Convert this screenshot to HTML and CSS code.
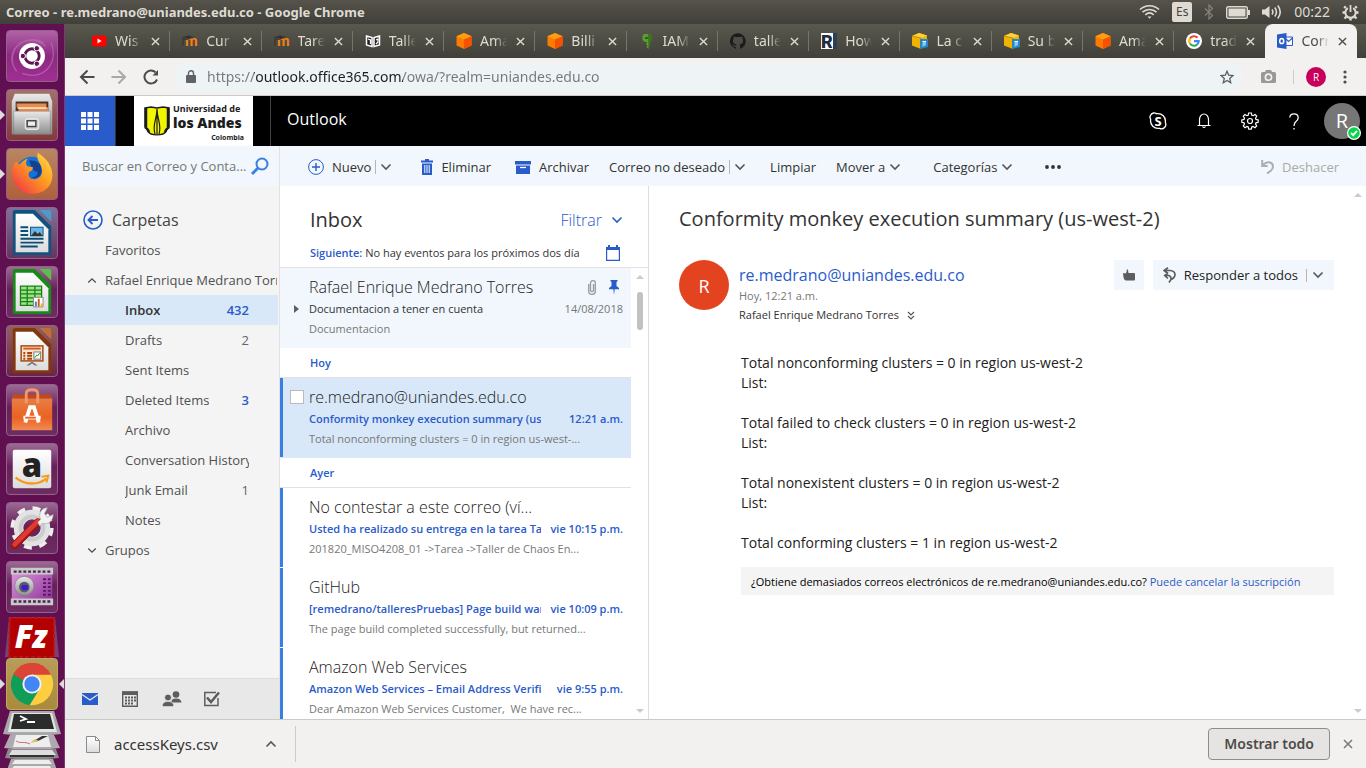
FILE: index.html
```html
<!DOCTYPE html>
<html lang="es">
<head>
<meta charset="utf-8">
<title>Correo - re.medrano@uniandes.edu.co</title>
<meta name="viewport" content="width=device-width, initial-scale=1">
<link rel="stylesheet" href="styles.css">
</head>
<body>
<svg class="defs" aria-hidden="true">
  <defs>
    <linearGradient id="silver" x1="0" y1="0" x2="0" y2="1"><stop offset="0" stop-color="#e9e9e9"/><stop offset="1" stop-color="#8d8d8d"/></linearGradient>
    <linearGradient id="paper" x1="0" y1="0" x2="0" y2="1"><stop offset="0" stop-color="#fff"/><stop offset="1" stop-color="#dcdcdc"/></linearGradient>
    <linearGradient id="bag" x1="0" y1="0" x2="0" y2="1"><stop offset="0" stop-color="#e67e45"/><stop offset=".6" stop-color="#ec6220"/><stop offset="1" stop-color="#f08a55"/></linearGradient>
    <linearGradient id="fox" x1="1" y1="0" x2="0" y2="1"><stop offset="0" stop-color="#ffe14d"/><stop offset=".45" stop-color="#ff9a1f"/><stop offset="1" stop-color="#f0264f"/></linearGradient>
    <linearGradient id="film" x1="0" y1="0" x2="1" y2="1"><stop offset="0" stop-color="#e09ae0"/><stop offset="1" stop-color="#8a2f96"/></linearGradient>
  </defs>
  <symbol id="i-close" viewBox="0 0 10 10"><path d="M1 1l8 8M9 1l-8 8" fill="none" stroke="currentColor" stroke-width="1.5"/></symbol>
  <symbol id="i-down" viewBox="0 0 12 8"><path d="M1.500 1.500l4.500 4.500 4.500-4.500" fill="none" stroke="currentColor" stroke-width="1.600"/></symbol>
  <symbol id="i-up" viewBox="0 0 12 8"><path d="M1.500 6.500l4.500-4.500 4.500 4.500" fill="none" stroke="currentColor" stroke-width="1.600"/></symbol>
  <symbol id="i-moodle" viewBox="0 0 16 16"><text x="3" y="13" font-family="Lato, sans-serif" font-weight="900" font-size="15" fill="#f08019">m</text><path d="M0 5l6-2 4 1-4 2-5 .500v6" fill="none" stroke="#3c3a37" stroke-width="1.600"/><path d="M2 5l4-1.500 3 .700-3 1.300z" fill="#2b2b2b"/></symbol>
  <symbol id="i-cube" viewBox="0 0 16 16"><path d="M8 0l7.500 3.300v9.200L8 16 .500 12.500V3.300z" fill="#ff7a00"/><path d="M8 0l7.500 3.300L8 6.500.500 3.300z" fill="#ff9d12"/><path d="M8 6.500l7.500-3.200v9.200L8 16z" fill="#f55200"/></symbol>
  <symbol id="i-box" viewBox="0 0 16 16"><path d="M0 3l7-3 8 2.500V6H9v10l-9-3.500z" fill="#f2b200"/><path d="M0 3l7-3 8 2.500-6 2.500z" fill="#ffd03b"/><path d="M0 3l9 2v11" fill="none" stroke="#9a6f00" stroke-width=".600"/><path d="M8 6h8v8l-8 2z" fill="#2388c9"/><path d="M10.500 8h3.500v1.500h-3.500zm0 2.500H14v1h-3.500zm0 2H14l-3.500 1z" fill="#fff"/></symbol>
</svg>

<header class="panel">
  <h1 class="panel-title">Correo - re.medrano@uniandes.edu.co - Google Chrome</h1>
  <div class="indicators">
    <svg width="21" height="16" viewBox="0 0 21 16" fill="none" stroke="#dfdbd2" stroke-width="1.600"><path d="M1 5.500C6.500 .500 14.500.500 20 5.500M3.500 8.200c4-3.700 10-3.700 14 0M6.300 10.800c2.500-2.200 5.900-2.200 8.400 0"/><path d="M8.500 12.500h4l-2 2.200z" fill="#dfdbd2" stroke="none"/></svg>
    <span class="kbd">Es</span>
    <svg width="10" height="16" viewBox="0 0 10 16" fill="none" stroke="#85837a" stroke-width="1.200"><path d="M1 4.500l7.500 7L5 15V1l3.500 3.500L1 11.500"/></svg>
    <svg width="24" height="13" viewBox="0 0 24 13"><rect x=".700" y=".700" width="20.600" height="11.600" rx="1.500" fill="none" stroke="#dfdbd2" stroke-width="1.400"/><rect x="2.500" y="2.500" width="17" height="8" fill="#dfdbd2"/><path d="M22 4h2v5h-2z" fill="#dfdbd2"/></svg>
    <svg width="20" height="16" viewBox="0 0 20 16" fill="none" stroke="#dfdbd2" stroke-width="1.600"><path d="M0 5.500h3L7.500 2v12L3 10.500H0z" fill="#dfdbd2" stroke="none"/><path d="M10 5.500c1 1.500 1 3.500 0 5M12.800 3.500c2 2.700 2 6.300 0 9M15.800 1.500c3 4 3 9 0 13"/></svg>
    <time class="clock">00:22</time>
    <svg width="17" height="17" viewBox="0 0 17 17" fill="none" stroke="#dfdbd2"><path d="M5.800 4.200a5.200 5.200 0 1 0 5.400 0" stroke-width="2"/><path d="M8.500 1v7" stroke-width="1.800"/><path d="M3.800 4L2.200 2.400M13.200 4l1.600-1.600M3 8.500H.500M14 8.500h2.500M4.500 12.500l-2 2M12.500 12.500l2 2M8.500 14v2.500" stroke-width="2.400"/></svg>
  </div>
</header>

<div class="desktop">
  <nav class="launcher" aria-label="Lanzador">
    <button class="tile t-dash" aria-label="Inicio"><svg viewBox="0 0 52 52"><path d="M6 34C2 12 26 2 40 16M10 42c-16-22 10-40 28-30M46 12c8 22-8 40-30 32" fill="none" stroke="#c06ab8" stroke-width="1.500" opacity=".7"/><circle cx="26" cy="26" r="13.500" fill="#fff"/><circle cx="26" cy="26" r="7.500" fill="none" stroke="#5c1650" stroke-width="3"/><g fill="#5c1650" stroke="#fff" stroke-width="1"><circle cx="16.500" cy="26" r="2.800"/><circle cx="31" cy="18" r="2.800"/><circle cx="31" cy="34" r="2.800"/></g></svg></button>
    <button class="tile t-files running" aria-label="Archivos"><svg viewBox="0 0 52 52"><path d="M8 4h36l3 8v34H5V12z" fill="url(#silver)"/><path d="M9 12h34v10H9z" fill="#4b3228"/><path d="M10 14h31v4H10zm2 4h31v5H12z" fill="#ea8a4c"/><path d="M11 18h30v1.500H11z" fill="#fff0dc"/><path d="M7 22h38v24H7z" fill="url(#silver)" stroke="#777" stroke-width=".500"/><rect x="19" y="30" width="14" height="11" rx="2" fill="#ccc" stroke="#f4f4f4"/><rect x="21" y="32" width="9" height="6" fill="#eee" stroke="#444" stroke-width="1.500"/></svg></button>
    <button class="tile t-fox running" aria-label="Firefox"><svg viewBox="0 0 52 52"><circle cx="26" cy="25" r="17" fill="#1372d8"/><path d="M23 12c8-1 14 4 13 11s-7 9-11 6c4 1 7-1 7-5-7-1-7-8-9-12z" fill="#15408f"/><path d="M5 22c1-5 3-8 5-9 1 2 2 3 3 3 2-2 5-5 9-6-2 2-3 5-1 8l6 1c0 3-2 4-4 5-2 5 2 9 8 7 5-2 6-6 5-11-1-6-6-8-4-16 5 3 11 9 12 12 6 10 4 24-9 29-13 5-30-2-30-23z" fill="url(#fox)"/></svg></button>
    <button class="tile t-writer" aria-label="Writer"><svg viewBox="0 0 52 52"><path d="M9 2h20l17 17v28q0 2-2 2H8q-2 0-2-2V4q0-2 3-2z" fill="#12527e"/><path d="M34 2h10q2 0 2 2v10z" fill="#4c9cc9"/><path d="M9 6h18l16 16v24H9z" fill="url(#paper)"/><path d="M14 20h8M14 24h8M14 28h8M14 32h24M14 36h24M14 40h18" stroke="#0b4e79" stroke-width="2"/><rect x="24.500" y="20" width="13" height="9" fill="#67b8e8" stroke="#0b4e79"/><path d="M25 29l4-5 3 3 2-2 3 4z" fill="#333"/></svg></button>
    <button class="tile t-calc" aria-label="Calc"><svg viewBox="0 0 52 52"><path d="M9 2h20l17 17v28q0 2-2 2H8q-2 0-2-2V4q0-2 3-2z" fill="#188a18"/><path d="M34 2h10q2 0 2 2v10z" fill="#5cc046"/><path d="M9 6h18l16 16v24H9z" fill="url(#paper)"/><path d="M14 20h22v20H14z" fill="#9ce383"/><path d="M14 20h22v20H14zM14 24h22M14 28h22M14 32h22M14 36h22M21 20v20M29 20v20" fill="none" stroke="#168016" stroke-width="1.300"/><path d="M27.500 31.500h10v10h-10z" fill="#fff" stroke="#888"/><path d="M29 36h2v5h-2z" fill="#3a87c7"/><path d="M32 33h2v8h-2z" fill="#d85a14"/><path d="M35 38h2v3h-2z" fill="#e6b600"/></svg></button>
    <button class="tile t-impress" aria-label="Impress"><svg viewBox="0 0 52 52"><path d="M9 2h20l17 17v28q0 2-2 2H8q-2 0-2-2V4q0-2 3-2z" fill="#83370f"/><path d="M34 2h10q2 0 2 2v10z" fill="#bf6f3c"/><path d="M9 6h18l16 16v24H9z" fill="url(#paper)"/><rect x="14.700" y="20.700" width="22.600" height="15.600" fill="#f9e2d2" stroke="#a3450d" stroke-width="1.500"/><path d="M17 23.500h18" stroke="#d85a14" stroke-width="2"/><path d="M17 28h2M17 31h2M17 34h2M21 28h5M21 31h5M21 34h5" stroke="#a3450d" stroke-width="2"/><rect x="28" y="27" width="7" height="7.500" fill="#fff" stroke="#777"/><path d="M29 33l2-3 1 1 2-3" fill="none" stroke="#1c9a1c"/><path d="M26 37l-6 4h3l3-2 3 2h3z" fill="#777"/></svg></button>
    <button class="tile" aria-label="Software de Ubuntu"><svg viewBox="0 0 52 52"><path d="M6 10h39l2 4H5z" fill="#c14a17"/><path d="M5 14h42v33H5z" fill="url(#bag)"/><path d="M20 19V9q0-4 6-4t6 4v10" fill="none" stroke="#f0986c" stroke-width="3"/><path d="M19 39l5-16h4l5 16M17 34h18" fill="none" stroke="#fff" stroke-width="4"/><path d="M19 34h11" stroke="#f26322" stroke-width="2"/></svg></button>
    <button class="tile" aria-label="Amazon"><svg viewBox="0 0 52 52"><rect x="6" y="6" width="40" height="40" rx="2" fill="url(#paper)"/><text x="26" y="34" text-anchor="middle" font-family="Open Sans, sans-serif" font-weight="800" font-size="34" fill="#222">a</text><path d="M9 35c10 8 23 8 32 1" fill="none" stroke="#f79a1a" stroke-width="2.500"/><path d="M36 34l7-1-2 7" fill="none" stroke="#f79a1a" stroke-width="2"/></svg></button>
    <button class="tile" aria-label="Configuración del sistema"><svg viewBox="0 0 52 52"><circle cx="26" cy="26" r="20" fill="none" stroke="#eee" stroke-width="5" stroke-dasharray="8 7.700"/><circle cx="26" cy="26" r="14" fill="none" stroke="#e3e3e3" stroke-width="10"/><circle cx="26" cy="26" r="12" fill="none" stroke="#ccc" stroke-width="4"/><path d="M8 44L32 20" stroke="#9d1414" stroke-width="8" stroke-linecap="round"/><path d="M8 43L32 19" stroke="#dc3a34" stroke-width="5" stroke-linecap="round"/><path d="M32 20l3-3c-3-6 1-12 7-12l-3 6 3 4 6-3c0 7-6 11-11 9l-3 3z" fill="#f2f2f2" stroke="#aaa" stroke-width=".700"/></svg></button>
    <button class="tile" aria-label="Grabador de pantalla"><svg viewBox="0 0 52 52"><path d="M5 8h42v35H5z" fill="url(#film)"/><path d="M4 6h44v7H4zM4 38h44v7H4z" fill="#c9c9c9"/><path d="M7 10h38M7 41h38" stroke="#4d2350" stroke-width="2.500" stroke-dasharray="3 2"/><path d="M39 17v20M44 17v20" stroke="#571a60" stroke-width="3" stroke-dasharray="2 2"/><circle cx="18" cy="25" r="10" fill="url(#silver)" stroke="#777" stroke-width=".600"/><circle cx="18" cy="26" r="5.500" fill="#5a5a66"/><rect x="15" y="24" width="7" height="5" rx="2" fill="#3b1bd8"/></svg></button>
    <div class="tile-stack">
      <button class="fold" aria-label="FileZilla"><svg width="56" height="42" viewBox="0 0 56 42"><path d="M5 1h46l4 40H1z" fill="#7a4070"/><path d="M6 2h44v39H5z" fill="#b30000" stroke="#c01010" stroke-width="2" stroke-dasharray="4 2"/><text x="27" y="32" text-anchor="middle" font-family="Open Sans, sans-serif" font-style="italic" font-weight="800" font-size="31" fill="#fff">Fz</text></svg></button>
      <button class="tile t-chrome running active" aria-label="Google Chrome"><svg viewBox="0 0 52 52"><circle cx="26" cy="26" r="22" fill="#ffcd40"/><path d="M26 26L7 15a22 22 0 0 1 38.500 1H26z" fill="#db4437"/><path d="M26 26L7 15a22 22 0 0 0 16.500 33L34 31z" fill="#0f9d58"/><path d="M6.500 15.500a22 22 0 0 1 39 .500H26a10 10 0 0 0-9 6z" fill="#db4437"/><circle cx="26" cy="26" r="10" fill="#f1f1f1"/><circle cx="26" cy="26" r="8" fill="#4285f4"/></svg></button>
      <button class="fold" aria-label="Más aplicaciones"><svg width="60" height="60" viewBox="0 0 60 60"><path d="M8 1h44l7 23q-29 4-58 0z" fill="#a9a9a9"/><path d="M10 3h40l5 19H6z" fill="#e4e4e4"/><path d="M12 4h36l4 15H9z" fill="#2b2d2c"/><path d="M18 6l6 3-6 2M25 12h8" fill="none" stroke="#fff" stroke-width="1.800"/><path d="M8 25h44l6 13q-28 4-56 0z" fill="#b1a9b0"/><path d="M14 25h32l3 12H11z" fill="#eee"/><path d="M30 32l10-6h6l-10 5z" fill="#333"/><path d="M28 33l5-4 4 2z" fill="#dfbf53"/><path d="M14 31c5 3 8 0 14 3" fill="none" stroke="#c67" /><path d="M6 39h48l3 9q-27 3-54 0z" fill="#8c858b"/><path d="M10 40h40l4 5H7z" fill="#ddd"/><path d="M8 46h44" stroke="#333" stroke-width="2"/><path d="M9 49h42l4 11H5z" fill="#a9a9a9"/><path d="M13 50h34l3 4H10zM12 56h36l2 4H9z" fill="#eee"/></svg></button>
    </div>
  </nav>

  <div class="browser">
    <div class="tabstrip">
      <div class="tabs">
        <div class="tab"><svg class="fav" viewBox="0 0 16 16"><rect x="1" y="2.500" width="14.500" height="11" rx="2.500" fill="red"/><path d="M6.500 5.500l4.200 2.500-4.200 2.500z" fill="#fff"/></svg><span>Wis</span><button aria-label="Cerrar"><svg><use href="#i-close"/></svg></button></div>
        <div class="tab"><svg class="fav"><use href="#i-moodle"/></svg><span>Cur</span><button aria-label="Cerrar"><svg><use href="#i-close"/></svg></button></div>
        <div class="tab"><svg class="fav"><use href="#i-moodle"/></svg><span>Tare</span><button aria-label="Cerrar"><svg><use href="#i-close"/></svg></button></div>
        <div class="tab"><svg class="fav" viewBox="0 0 16 16"><path d="M1.500 3l5.500 1.500v9L1.500 12zM14.500 3L9 4.500v9l5.500-1.500z" fill="#222" stroke="#fff" stroke-width="1.500"/><path d="M3 6l2.500 1v4M11 7l2-1v3l-2 2" fill="none" stroke="#fff" stroke-width="1.200"/></svg><span>Talle</span><button aria-label="Cerrar"><svg><use href="#i-close"/></svg></button></div>
        <div class="tab"><svg class="fav"><use href="#i-cube"/></svg><span>Ama</span><button aria-label="Cerrar"><svg><use href="#i-close"/></svg></button></div>
        <div class="tab"><svg class="fav"><use href="#i-cube"/></svg><span>Billi</span><button aria-label="Cerrar"><svg><use href="#i-close"/></svg></button></div>
        <div class="tab"><svg class="fav" viewBox="0 0 16 16"><path d="M5 1h6l2 2v4l-2 1.500L9.500 16l-2-2 1-1.500-1.500-1 1-2L5 8.500 3.500 7V3z" fill="#55a02c"/><path d="M9 1h2l2 2v4l-2 1.500L9.500 16z" fill="#3a741c"/><path d="M6 4h3v2H6z" fill="#4d4c45"/></svg><span>IAM</span><button aria-label="Cerrar"><svg><use href="#i-close"/></svg></button></div>
        <div class="tab"><svg class="fav" viewBox="0 0 16 16"><path d="M8 .200a8 8 0 0 0-2.500 15.600c.400.100.500-.200.500-.400v-1.500c-2.200.500-2.700-1-2.700-1-.400-.900-.900-1.200-.900-1.200-.700-.500.100-.500.100-.500.800.100 1.200.800 1.200.800.700 1.200 1.900.900 2.300.700.100-.500.300-.900.500-1.100-1.800-.200-3.600-.900-3.600-4 0-.900.300-1.600.800-2.100-.100-.200-.400-1 .100-2.100 0 0 .700-.200 2.200.800a7.600 7.600 0 0 1 4 0c1.500-1 2.200-.800 2.200-.800.400 1.100.200 1.900.100 2.100.500.600.800 1.300.800 2.100 0 3.100-1.900 3.700-3.700 3.900.300.300.600.800.600 1.500v2.300c0 .200.100.500.500.400A8 8 0 0 0 8 .200z" fill="#1b1b1b"/></svg><span>talle</span><button aria-label="Cerrar"><svg><use href="#i-close"/></svg></button></div>
        <div class="tab"><svg class="fav" viewBox="0 0 16 16"><rect width="16" height="16" fill="#2d3f57"/><path d="M0 0h12v16H0z" fill="#fff"/><text x="0" y="15" font-family="Roboto, sans-serif" font-weight="900" font-size="18" fill="#1f2d40">R</text></svg><span>How</span><button aria-label="Cerrar"><svg><use href="#i-close"/></svg></button></div>
        <div class="tab"><svg class="fav"><use href="#i-box"/></svg><span>La c</span><button aria-label="Cerrar"><svg><use href="#i-close"/></svg></button></div>
        <div class="tab"><svg class="fav"><use href="#i-box"/></svg><span>Su b</span><button aria-label="Cerrar"><svg><use href="#i-close"/></svg></button></div>
        <div class="tab"><svg class="fav"><use href="#i-cube"/></svg><span>Ama</span><button aria-label="Cerrar"><svg><use href="#i-close"/></svg></button></div>
        <div class="tab last"><svg class="fav" viewBox="0 0 16 16"><circle cx="8" cy="8" r="8" fill="#fff"/><g fill="none" stroke-width="2.200"><path d="M11.500 4.800A4.700 4.700 0 0 0 4 5.500" stroke="#ea4335"/><path d="M4 5.500a4.700 4.700 0 0 0 0 5" stroke="#fbbc05"/><path d="M4 10.500a4.700 4.700 0 0 0 7.200 1" stroke="#34a853"/><path d="M11.200 11.500A4.500 4.500 0 0 0 12.700 8.100H8" stroke="#4285f4"/></g></svg><span>trad</span><button aria-label="Cerrar"><svg><use href="#i-close"/></svg></button></div>
        <div class="tab current"><svg class="fav" viewBox="0 0 16 16"><path d="M8.500 4h7v8.500h-7z" fill="#fff" stroke="#2a5cc5"/><path d="M9 6l2.500 2.500L15.500 5" fill="none" stroke="#2a5cc5" stroke-width="1.200"/><path d="M0 1.500L9.500 0v16L0 14.500z" fill="#2a5cc5"/><ellipse cx="4.700" cy="8" rx="2" ry="2.600" fill="none" stroke="#fff" stroke-width="1.500"/></svg><span>Corr</span><button aria-label="Cerrar"><svg><use href="#i-close"/></svg></button></div>
      </div>
      <button class="newtab" aria-label="Pestaña nueva"><svg width="12" height="12" viewBox="0 0 12 12"><path d="M6 0v12M0 6h12" stroke="#e8e6df" stroke-width="1.800"/></svg></button>
    </div>

    <div class="toolbar">
      <button aria-label="Atrás"><svg width="16" height="16" viewBox="0 0 16 16" fill="none" stroke="#4c4b48" stroke-width="2"><path d="M15.500 8H2M8.500 1.500L2 8l6.500 6.500"/></svg></button>
      <button aria-label="Adelante"><svg width="16" height="16" viewBox="0 0 16 16" fill="none" stroke="#aaa9a6" stroke-width="2"><path d="M.500 8H14M7.500 1.500L14 8l-6.500 6.500"/></svg></button>
      <button aria-label="Recargar"><svg width="16" height="16" viewBox="0 0 16 16" fill="none" stroke="#4c4b48" stroke-width="2"><path d="M14 10.500A6.500 6.500 0 1 1 12.500 3.300"/><path d="M9.500 6.500H15V1z" fill="#4c4b48" stroke="none"/></svg></button>
      <div class="omnibox">
        <svg width="10" height="13" viewBox="0 0 10 13"><path d="M1 5h8q1 0 1 1v6q0 1-1 1H1q-1 0-1-1V6q0-1 1-1z" fill="#5f6368"/><path d="M2.500 5.500V3.200a2.500 2.500 0 0 1 5 0v2.300" fill="none" stroke="#5f6368" stroke-width="1.400"/></svg>
        <input type="text" aria-label="Dirección" value="https://outlook.office365.com/owa/?realm=uniandes.edu.co">
        <svg width="14" height="14" viewBox="0 0 14 14"><path d="M7 1.200l1.700 4 4.300.400-3.300 2.800 1 4.300L7 10.400l-3.700 2.300 1-4.300L1 5.600l4.300-.400z" fill="none" stroke="#5a5e63" stroke-width="1.300"/></svg>
      </div>
      <div class="extras">
        <svg width="15" height="13" viewBox="0 0 15 13"><path d="M1.500 2H4l1-2h5l1 2h2.500Q15 2 15 3.500v8q0 1.500-1.500 1.500h-12Q0 13 0 11.500v-8Q0 2 1.500 2z" fill="#999895"/><circle cx="7.500" cy="7.200" r="3.900" fill="#f2f1f0"/><circle cx="7.500" cy="7.200" r="2.200" fill="#999895"/></svg>
        <i class="vline"></i>
        <button class="profile" aria-label="Perfil">R</button>
        <svg width="4" height="14" viewBox="0 0 4 14" fill="#4c4b48"><circle cx="2" cy="2" r="1.600"/><circle cx="2" cy="7" r="1.600"/><circle cx="2" cy="12" r="1.600"/></svg>
      </div>
    </div>

    <div class="suite">
      <button class="waffle" aria-label="Iniciador de aplicaciones"><svg width="18" height="18" viewBox="0 0 18 18" fill="#fff"><path d="M0 0h5v5H0zM6.500 0h5v5h-5zM13 0h5v5h-5zM0 6.500h5v5H0zM6.500 6.500h5v5h-5zM13 6.500h5v5h-5zM0 13h5v5H0zM6.500 13h5v5h-5zM13 13h5v5h-5z"/></svg></button>
      <div class="brand">
        <svg width="26" height="30" viewBox="0 0 26 30"><path d="M1 2l6-1 6 1 6-1 6 1v19c-3 1-2 6-6 7-3 1-9 1-12 0-4-1-3-6-6-7z" fill="#f2f500" stroke="#1c1c1c" stroke-width="1.500"/><path d="M2 2v20q2 1 3 4M24 2v20q-2 1-3 4" fill="none" stroke="#1c1c1c" stroke-width="2.500"/><path d="M13 3c0 10-5 16-2 25M13 3c0 10 5 16 2 25M13 6v22" fill="none" stroke="#1c1c1c" stroke-width="1.200"/></svg>
        <div class="brand-text"><span>Universidad de</span><strong>los Andes</strong><small>Colombia</small></div>
      </div>
      <span class="suite-app">Outlook</span>
      <div class="suite-icons">
        <button aria-label="Skype"><svg width="18" height="18" viewBox="0 0 18 18"><path d="M4.500 1a4 4 0 0 1 3 .700A7.500 7.500 0 0 1 16.300 10.500 4.300 4.300 0 0 1 10.500 16.300 7.500 7.500 0 0 1 1.700 7.500 4.300 4.300 0 0 1 4.500 1z" fill="none" stroke="#fff" stroke-width="1.300"/><text x="9" y="13.500" text-anchor="middle" font-family="Open Sans, sans-serif" font-size="13" font-weight="700" fill="#fff">S</text></svg></button>
        <button aria-label="Notificaciones"><svg width="14" height="16" viewBox="0 0 14 16" fill="none" stroke="#fff" stroke-width="1.200"><path d="M.500 12.500h13M2.500 12V6.500a4.500 5.500 0 0 1 9 0V12M5.500 13.500q1.500 2 3 0"/></svg></button>
        <button aria-label="Configuración"><svg width="18" height="18" viewBox="0 0 18 18" fill="none" stroke="#fff" stroke-width="1.200"><path d="M7.600 1h2.800l.500 2.200 1.200.500 2-1.200 1.600 1.700-1.200 2 .500 1.200 2.200.500v2.400l-2.200.500-.500 1.200 1.200 2-1.700 1.700-2-1.200-1.200.500-.500 2.200H7.700l-.500-2.200-1.200-.500-2 1.200-1.700-1.700 1.200-2L3 10.800l-2.200-.500V7.900L3 7.400l.500-1.200-1.200-2L4 2.500l2 1.200 1.200-.500z"/><circle cx="9" cy="9" r="2.500"/></svg></button>
        <button aria-label="Ayuda"><svg width="10" height="17" viewBox="0 0 10 17" fill="none" stroke="#fff" stroke-width="1.300"><path d="M.800 4.500Q1 .800 5 .800t4.200 3.700Q9.200 7 7 8.500 5 10 5 13"/><path d="M5 15v1.600"/></svg></button>
        <button class="me" aria-label="Cuenta">R<svg class="presence" width="14" height="14" viewBox="0 0 14 14"><circle cx="7" cy="7" r="6.400" fill="#0bd34a" stroke="#fff" stroke-width="1.200"/><path d="M4 7l2.200 2.200L10 4.800" fill="none" stroke="#fff" stroke-width="1.800"/></svg></button>
      </div>
    </div>

    <div class="mail">
      <aside class="sidebar">
        <form class="search"><input type="text" aria-label="Buscar" placeholder="Buscar en Correo y Conta..."><button type="button" aria-label="Buscar"><svg width="18" height="18" viewBox="0 0 18 18" fill="none" stroke="#3a7fe0"><circle cx="11" cy="7" r="5.500" stroke-width="2"/><path d="M7 11l-6 6" stroke-width="2.800"/></svg></button></form>
        <div class="folders">
          <h2><svg width="20" height="20" viewBox="0 0 20 20" fill="none" stroke="#2a5bcb"><circle cx="10" cy="10" r="9" stroke-width="1.600"/><path d="M15 10H6M9.500 6L5.500 10l4 4" stroke-width="1.900"/></svg>Carpetas</h2>
          <a href="#" class="root"><i></i><span>Favoritos</span></a>
          <a href="#" class="root wide"><svg><use href="#i-up"/></svg><span>Rafael Enrique Medrano Torres</span></a>
          <a href="#" class="folder selected"><span>Inbox</span><b>432</b></a>
          <a href="#" class="folder"><span>Drafts</span><em>2</em></a>
          <a href="#" class="folder"><span>Sent Items</span></a>
          <a href="#" class="folder"><span>Deleted Items</span><b>3</b></a>
          <a href="#" class="folder"><span>Archivo</span></a>
          <a href="#" class="folder"><span>Conversation History</span></a>
          <a href="#" class="folder"><span>Junk Email</span><em>1</em></a>
          <a href="#" class="folder"><span>Notes</span></a>
          <a href="#" class="root"><svg><use href="#i-down"/></svg><span>Grupos</span></a>
        </div>
        <div class="modules">
          <button aria-label="Correo"><svg width="16" height="12" viewBox="0 0 16 12"><path d="M0 0h16v12H0z" fill="#2a5bcb"/><path d="M0 1.500l8 5.500 8-5.500" fill="none" stroke="#e8e8e8" stroke-width="1.300"/></svg></button>
          <button aria-label="Calendario"><svg width="16" height="16" viewBox="0 0 16 16"><path d="M.700 1h14.600v14.300H.700z" fill="none" stroke="#5d5d5d" stroke-width="1.400"/><path d="M0 .500h16V4H0z" fill="#5d5d5d"/><path d="M3 6.500h11M3 9.500h11M3 12.500h8" stroke="#5d5d5d" stroke-width="2" stroke-dasharray="2 1"/></svg></button>
          <button aria-label="Contactos"><svg width="20" height="16" viewBox="0 0 20 16" fill="#5d5d5d"><circle cx="14" cy="3.500" r="3.300"/><path d="M9.500 11.500Q9 7.500 14 7.500t5.500 4z"/><circle cx="6" cy="6.500" r="3.500" stroke="#e8e8e8"/><path d="M.500 15.500Q0 10.500 6 10.500t5.500 5z" stroke="#e8e8e8" stroke-width=".600"/></svg></button>
          <button aria-label="Tareas"><svg width="16" height="16" viewBox="0 0 16 16" fill="none" stroke="#5d5d5d"><path d="M14 7v7.500H.800V1.500H12" stroke-width="1.500"/><path d="M3 6.500l4 4.500L15 1.500" stroke-width="2.500"/></svg></button>
        </div>
      </aside>

      <main class="content">
        <div class="commands">
          <button class="cmd-new"><svg width="16" height="16" viewBox="0 0 16 16" fill="none" stroke="#2a5bcb"><circle cx="8" cy="8" r="7.400"/><path d="M8 4v8M4 8h8" stroke-width="1.400"/></svg>Nuevo<i class="vline"></i><svg class="chev"><use href="#i-down"/></svg></button>
          <button class="cmd-del"><svg width="12" height="16" viewBox="0 0 12 16"><path d="M0 1.500h4V0h4v1.500h4v2H0z" fill="#2a5bcb"/><path d="M1 4.500h10V16H1z" fill="#2a5bcb"/><path d="M3.800 6v8M6 6v8M8.200 6v8" stroke="#f1f7fc"/></svg>Eliminar</button>
          <button class="cmd-arc"><svg width="16" height="13" viewBox="0 0 16 13"><path d="M0 0h16v3.500H0zM1 4.500h14V13H1z" fill="#2a5bcb"/><path d="M5 6.500h6" stroke="#fff" stroke-width="1.300"/></svg>Archivar</button>
          <button class="cmd-junk">Correo no deseado<i class="vline"></i><svg class="chev"><use href="#i-down"/></svg></button>
          <button class="cmd-clean">Limpiar</button>
          <button class="cmd-move">Mover a<svg class="chev"><use href="#i-down"/></svg></button>
          <button class="cmd-cat">Categorías<svg class="chev"><use href="#i-down"/></svg></button>
          <button aria-label="Más"><svg width="16" height="4" viewBox="0 0 16 4" fill="#333"><circle cx="2" cy="2" r="1.900"/><circle cx="8" cy="2" r="1.900"/><circle cx="14" cy="2" r="1.900"/></svg></button>
          <button class="undo" disabled><svg width="13" height="14" viewBox="0 0 13 14" fill="none" stroke="#a9b0b5" stroke-width="2"><path d="M1.200 0v6h5.500M1.500 5.500Q5 1.500 9 2.500q3 1 3 4 0 2.500-2.500 4.500L6 13.500"/></svg>Deshacer</button>
        </div>

        <div class="panes">
          <section class="list">
            <div class="list-head"><h2>Inbox</h2><button>Filtrar<svg class="chev"><use href="#i-down"/></svg></button></div>
            <div class="agenda"><p><strong>Siguiente:</strong> No hay eventos para los próximos dos día</p><svg width="14" height="16" viewBox="0 0 14 16"><path d="M.600 2.500h12.800v12.900H.600z" fill="none" stroke="#2a5bcb" stroke-width="1.200"/><path d="M0 2h14v3H0zM2 0h2v3H2zM10 0h2v3h-2z" fill="#2a5bcb"/></svg></div>
            <div class="scroller">
              <div class="messages">
                <article class="msg pinned">
                  <h3>Rafael Enrique Medrano Torres</h3>
                  <span class="flags"><svg width="8" height="15" viewBox="0 0 8 15" fill="none" stroke="#999" stroke-width="1.300"><path d="M5.500 4v6.500q0 1-1.500 1t-1.500-1V3.500Q2.500.700 5 .700T7.300 3v8.500Q7.300 14.300 4 14.300T.700 11.500V4"/></svg><svg width="10" height="15" viewBox="0 0 10 15" fill="#2a5bcb"><path d="M1.500 0h7v1.200L7.500 2v4L10 8v1.200H5.700L5 15l-.700-5.800H0V8l2.500-2V2l-1-.800z"/></svg></span>
                  <svg class="expand" width="5" height="8" viewBox="0 0 5 8"><path d="M0 0l5 4-5 4z" fill="#5d5d6a"/></svg>
                  <p class="subject">Documentacion a tener en cuenta</p><time>14/08/2018</time>
                  <p class="preview">Documentacion</p>
                </article>
                <h4>Hoy</h4>
                <article class="msg unread open">
                  <input type="checkbox" aria-label="Seleccionar mensaje">
                  <h3>re.medrano@uniandes.edu.co</h3>
                  <p class="subject">Conformity monkey execution summary (us-west-2)</p><time>12:21 a.m.</time>
                  <p class="preview">Total nonconforming clusters = 0 in region us-west-...</p>
                </article>
                <h4>Ayer</h4>
                <article class="msg unread">
                  <h3>No contestar a este correo (ví...</h3>
                  <p class="subject">Usted ha realizado su entrega en la tarea Taller</p><time>vie 10:15 p.m.</time>
                  <p class="preview">201820_MISO4208_01 -&gt;Tarea -&gt;Taller de Chaos En...</p>
                </article>
                <article class="msg unread">
                  <h3>GitHub</h3>
                  <p class="subject">[remedrano/talleresPruebas] Page build warning</p><time>vie 10:09 p.m.</time>
                  <p class="preview">The page build completed successfully, but returned...</p>
                </article>
                <article class="msg unread">
                  <h3>Amazon Web Services</h3>
                  <p class="subject">Amazon Web Services – Email Address Verification</p><time>vie 9:55 p.m.</time>
                  <p class="preview">Dear Amazon Web Services Customer,&nbsp; We have rec...</p>
                </article>
              </div>
              <div class="rail"><i class="arrow up"></i><i class="thumb"></i><i class="arrow down"></i></div>
            </div>
          </section>

          <section class="reading">
            <div class="reading-main">
              <h2>Conformity monkey execution summary (us-west-2)</h2>
              <header class="sender">
                <span class="avatar">R</span>
                <div class="who">
                  <a href="#">re.medrano@uniandes.edu.co</a>
                  <time>Hoy, 12:21 a.m.</time>
                  <p>Rafael Enrique Medrano Torres<svg width="8" height="9" viewBox="0 0 8 9" fill="none" stroke="#555" stroke-width="1.200"><path d="M1 1l3 3 3-3M1 5l3 3 3-3"/></svg></p>
                </div>
                <div class="actions">
                  <button class="like" aria-label="Me gusta"><svg width="12" height="12" viewBox="0 0 12 12" fill="#5d5d5d"><path d="M4 0l1 1 .500 3H11q1 .200 1 1v5.500q0 1-1 1H3Q1 11 .500 8.500L0 4l2.500.500L3.500 3z"/></svg></button>
                  <button class="reply"><svg width="13" height="16" viewBox="0 0 13 16" fill="none" stroke="#5d5d5d" stroke-width="1.700"><path d="M5 .700L1.200 3.500 5 6.500M1.500 3.500H7q5 .200 5 4.500-.500 3.500-4 4.500M5 6L1.800 8.500 5 11.500M2 8.500h4q2.500 1 2 4L6 15.500"/></svg>Responder a todos<i class="vline"></i><svg class="chev"><use href="#i-down"/></svg></button>
                </div>
              </header>
              <div class="body">
                <p>Total nonconforming clusters = 0 in region us-west-2<br>List:</p>
                <p>Total failed to check clusters = 0 in region us-west-2<br>List:</p>
                <p>Total nonexistent clusters = 0 in region us-west-2<br>List:</p>
                <p>Total conforming clusters = 1 in region us-west-2</p>
              </div>
              <p class="unsubscribe">¿Obtiene demasiados correos electrónicos de re.medrano@uniandes.edu.co? <a href="#">Puede cancelar la suscripción</a></p>
            </div>
            <div class="rail"><i class="arrow up"></i><i class="arrow down"></i></div>
          </section>
        </div>
      </main>
    </div>

    <footer class="downloads">
      <button class="file"><svg width="14" height="17" viewBox="0 0 14 17"><path d="M.500.500h9l4 4v12H.500z" fill="url(#paper)" stroke="#8a8a8a"/><path d="M9.500.500v4h4" fill="none" stroke="#8a8a8a"/></svg><span>accessKeys.csv</span><svg class="chev"><use href="#i-up"/></svg></button>
      <button class="show-all">Mostrar todo</button>
      <button class="dismiss" aria-label="Cerrar"><svg width="10" height="10"><use href="#i-close"/></svg></button>
    </footer>
  </div>
</div>
</body>
</html>
```
FILE: styles.css
```css
* { box-sizing: border-box; }
body { margin: 0; height: 100vh; display: flex; flex-direction: column; overflow: hidden; font-family: "Open Sans", "Noto Sans", sans-serif; font-size: 14px; line-height: 20px; color: #333; background: #fff; }
h1, h2, h3, h4, p { margin: 0; font-weight: 400; }
button { border: 0; padding: 0; background: none; font: inherit; color: inherit; display: flex; align-items: center; }
a { color: inherit; text-decoration: none; }
svg { flex: none; display: block; }
.defs { position: absolute; width: 0; height: 0; }
.chev { width: 12px; height: 8px; color: #555; }
.vline { width: 1px; height: 14px; background: #b5b5b5; flex: none; }

.panel { flex: none; height: 24px; padding: 0 7px 0 6px; display: flex; align-items: center; justify-content: space-between; background: linear-gradient(#55534a, #403f3a); color: #dfdbd2; font-family: "Noto Sans", sans-serif; }
.panel-title { font-size: 13px; font-weight: 700; }
.indicators { display: flex; align-items: center; gap: 12px; }
.kbd { width: 20px; height: 20px; border-radius: 2px; background: #dfdbd2; color: #45443f; font-size: 12px; text-align: center; }
.clock { font-size: 14px; }

.desktop { flex: 1; min-height: 0; display: flex; }
.launcher { flex: none; width: 65px; padding: 6px 0 0 6px; display: flex; flex-direction: column; gap: 7px; overflow: hidden; background: #600f50; border-right: 1px solid #7b3b6e; }
.tile { position: relative; flex: none; width: 52px; height: 52px; border-radius: 4px; border: 1px solid #93628b; background: linear-gradient(#9b6a94, #672059 45%, #6d2c62); }
.tile svg { width: 50px; height: 50px; }
.t-dash { background: linear-gradient(#b062a5, #8c2a80 50%, #a02f94); }
.t-files { background: linear-gradient(#a2706c, #85383a); }
.t-fox { background: linear-gradient(#b98663, #b0603b); }
.t-writer { background: linear-gradient(#80719a, #63355f); }
.t-impress { background: linear-gradient(#93605d, #6b2446); }
.t-chrome { border-color: #c3a75e; background: linear-gradient(#b79c5b, #a98b3c); }
.running::before, .active::after { content: ""; position: absolute; top: 20px; border: 5px solid transparent; }
.running::before { left: -7px; border-left-color: #ddd; }
.active::after { right: -7px; border-right-color: #ddd; }
.tile-stack { display: flex; flex-direction: column; margin-top: -4px; }
.fold { margin-left: -4px; width: 60px; justify-content: center; }

.browser { flex: 1; min-width: 0; display: flex; flex-direction: column; }
.tabstrip { flex: none; height: 34px; display: flex; padding-left: 14px; background: linear-gradient(#5a594e, #403f3a); }
.tabs { flex: 1; display: flex; }
.tab { flex: 1; min-width: 0; display: flex; align-items: center; padding: 0 10px 0 12px; position: relative; color: #dfdbd2; font: 14px/20px "Noto Sans", sans-serif; }
.tab::after { content: ""; position: absolute; right: 0; top: 7px; height: 20px; width: 1px; background: #77756b; }
.tab.last::after, .tab.current::after { display: none; }
.fav { width: 16px; height: 16px; }
.tab span { flex: 1; margin: 0 9px 0 8px; overflow: hidden; white-space: nowrap; mask-image: linear-gradient(to right, #000 55%, transparent); }
.tab button svg { width: 9px; height: 9px; }
.tab.current { background: #f2f1f0; color: #4c4b48; border-radius: 8px 8px 0 0; }
.newtab { width: 92px; padding-left: 16px; }

.toolbar { flex: none; height: 38px; display: flex; align-items: center; gap: 16px; padding: 0 19px 0 14px; background: #f2f1f0; border-bottom: 1px solid #ccc; }
.omnibox { flex: 1; height: 28px; display: flex; align-items: center; gap: 11px; padding: 0 9px 0 11px; border-radius: 14px; background: #eef3f5; }
.omnibox input { flex: 1; min-width: 0; border: 0; padding: 0; outline: 0; height: 20px; font: 14px/20px "Noto Sans", sans-serif; color: transparent; background: linear-gradient(to right, #777 47px, #1d1d1d 47px, #1d1d1d 196px, #777 196px); background-clip: text; -webkit-background-clip: text; }
.extras { display: flex; align-items: center; gap: 17px; margin-left: 2px; }
.extras .vline { margin-right: -5px; background: #ccc; }
.profile { width: 20px; height: 20px; border-radius: 50%; background: #c8005a; color: #fff; font-size: 10px; justify-content: center; }

.suite { flex: none; height: 50px; display: flex; align-items: stretch; background: #000; color: #fff; }
.waffle { width: 51px; justify-content: center; background: #2a5bcb; border-right: 1px solid #333; }
.brand { margin: 0 17px 0 18px; width: 119px; padding: 0 9px 0 10px; display: flex; align-items: center; gap: 3px; background: #fff; color: #1c1c1c; font-family: "Noto Sans", sans-serif; }
.brand-text { flex: 1; display: flex; flex-direction: column; padding-top: 6px; font-weight: 700; white-space: nowrap; }
.brand-text span { font-size: 9px; line-height: 12px; }
.brand-text strong { font-size: 14px; line-height: 16px; }
.brand-text small { font-size: 7px; line-height: 14px; text-align: right; }
.suite-app { flex: 1; border-left: 1px solid #444; padding-left: 16px; font-size: 16px; line-height: 46px; }
.suite-icons { display: flex; align-items: center; padding-right: 6px; gap: 30px; }
.me { position: relative; width: 36px; height: 36px; margin-left: -5px; border-radius: 50%; background: #767676; justify-content: center; font-size: 20px; }
.presence { position: absolute; right: -1px; bottom: -1px; }

.mail { flex: 1; min-height: 0; display: flex; }
.sidebar { flex: none; width: 215px; display: flex; flex-direction: column; background: #f4f4f4; border-right: 1px solid #e2e2e2; }
.search { height: 40px; padding: 0 10px 0 17px; display: flex; align-items: center; background: #f1f7fc; }
.search input { flex: 1; min-width: 0; border: 0; padding: 0; outline: 0; background: none; font: 13px/20px "Open Sans", sans-serif; }
.search input::placeholder { color: #777; opacity: 1; }
.folders { flex: 1; font-size: 13px; line-height: 30px; color: #505050; padding-top: 19px; }
.folders h2 { display: flex; align-items: center; gap: 9px; padding-left: 18px; font-size: 16px; line-height: 30px; color: #444; }
.folders a { display: flex; height: 30px; white-space: nowrap; }
.root { align-items: center; padding: 0 0 0 22px; }
.root svg, .root i { flex: none; width: 10px; height: 7px; margin-right: 8px; }
.wide { overflow: hidden; margin-right: 2px; }
.folder { justify-content: space-between; padding: 0 29px 0 60px; margin-right: 1px; }
.folder span { overflow: hidden; }
.folder b { font-weight: 600; color: #2a5bcb; }
.folder em { font-style: normal; color: #666; }
.selected { background: #d8e8f8; }
.selected span { font-weight: 600; color: #333; }
.modules { flex: none; height: 41px; display: flex; align-items: center; gap: 22px; padding-left: 17px; background: #e8e8e8; border-top: 1px solid #dcdcdc; }
.modules button { min-width: 18px; }

.content { flex: 1; min-width: 0; display: flex; flex-direction: column; }
.commands { flex: none; height: 40px; padding: 2px 27px 0 28px; display: flex; align-items: center; background: #f1f7fc; font-size: 13px; white-space: nowrap; }
.commands svg:first-child { margin-right: 8px; }
.commands .vline { margin: 0 4px; }
.cmd-new, .cmd-del, .cmd-junk, .cmd-cat { margin-right: 24px; }
.cmd-new { margin-right: 29px; }
.cmd-arc { margin-right: 20px; }
.cmd-clean { margin-right: 20px; }
.cmd-move { margin-right: 24px; }
.cmd-move .chev, .cmd-cat .chev { margin-left: 4px; }
.undo { margin-left: auto; color: #a9a9a9; }

.panes { flex: 1; min-height: 0; display: flex; }
.list { flex: none; width: 369px; display: flex; flex-direction: column; border-right: 1px solid #ddd; }
.list-head { display: flex; align-items: center; justify-content: space-between; padding: 20px 25px 0 30px; line-height: 28px; }
.list-head h2 { font-size: 20px; }
.list-head button { gap: 9px; font-size: 16px; font-weight: 300; color: #2a5bcb; }
.list-head .chev { color: #2a5bcb; }
.agenda { display: flex; align-items: center; justify-content: space-between; height: 34px; padding: 5px 28px 0 30px; border-bottom: 1px solid #e2e2e2; font-size: 11px; white-space: nowrap; }
.agenda p { overflow: hidden; flex: 0 1 280px; }
.agenda strong { font-weight: 600; color: #2a5bcb; }
.scroller { flex: 1; min-height: 0; display: flex; }
.messages { flex: 1; min-width: 0; overflow: hidden; }
.messages h4 { height: 30px; padding-left: 30px; border-bottom: 1px solid #e2e2e2; font-size: 11px; font-weight: 600; line-height: 30px; color: #2a5bcb; }
.msg { position: relative; height: 80px; padding: 8px 8px 0 29px; display: grid; grid-template-columns: 232px 1fr; grid-template-rows: 22px 20px 20px; white-space: nowrap; border-left: 0 solid #3a7fe0; }
.msg h3 { font-size: 16px; line-height: 22px; font-weight: 300; color: #222; grid-column: 1; }
.msg p, .msg time { font-size: 11px; line-height: 22px; }
.subject { grid-column: 1; overflow: hidden; }
.msg time { text-align: right; color: #777; }
.preview { grid-column: 1 / 3; color: #777; }
.pinned { background: #f1f7fc; }
.open { background: #d8e8f8; }
.unread::before { content: ""; position: absolute; left: 0; top: 0; bottom: 1px; width: 3px; background: #3a7fe0; }
.unread .subject, .unread time { color: #2a5bcb; font-weight: 600; }
.flags { display: flex; justify-content: flex-end; align-items: center; gap: 13px; padding-right: 4px; }
.expand { position: absolute; left: 14px; top: 37px; }
.msg input { position: absolute; left: 10px; top: 12px; width: 14px; height: 14px; margin: 0; appearance: none; background: #fff; border: 1px solid #bbb; }
.rail { flex: none; width: 17px; display: flex; flex-direction: column; align-items: center; padding: 7px 0 6px; }
.arrow { border: 4px solid transparent; }
.arrow.up { border-top: 0; border-bottom-color: #c8cdd2; }
.arrow.down { border-bottom: 0; border-top-color: #c8cdd2; margin-top: auto; }
.thumb { width: 6px; height: 38px; margin-top: 13px; border-radius: 3px; background: #c2c2c2; }

.reading { flex: 1; min-width: 0; display: flex; }
.reading-main { flex: 1; min-width: 0; padding: 18px 15px 0 30px; }
.reading-main h2 { font-size: 20px; line-height: 30px; }
.sender { display: flex; margin-top: 26px; }
.avatar { flex: none; width: 50px; height: 50px; border-radius: 50%; background: #e3431f; color: #fff; font-size: 18px; line-height: 52px; text-align: center; }
.who { flex: 1; padding: 4px 0 0 10px; font-size: 11px; }
.who a { display: block; font-size: 16px; line-height: 22px; color: #2a5bcb; }
.who time { display: block; line-height: 20px; color: #777; }
.who p { display: flex; align-items: center; gap: 8px; line-height: 18px; }
.actions { display: flex; gap: 9px; height: 30px; }
.actions button { background: #f1f7fc; height: 30px; }
.like { width: 30px; justify-content: center; }
.reply { padding: 0 10px; gap: 8px; font-size: 13px; color: #222; }
.reply .vline { height: 13px; margin-right: -3px; }
.body { margin: 29px 0 0 62px; padding-bottom: 14px; color: #222; }
.body p + p { margin-top: 20px; }
.unsubscribe { margin-left: 62px; padding: 5px 10px 3px; background: #f4f4f4; font-size: 11px; line-height: 20px; color: #000; }
.unsubscribe a { color: #2a5bcb; }

.downloads { flex: none; height: 49px; padding: 0 13px 0 21px; display: flex; align-items: center; border-top: 1px solid #c8ccc8; background: #f2f1f0; font: 15px/20px "Noto Sans", sans-serif; }
.file { height: 36px; width: 210px; border-right: 1px solid #ccc; padding-right: 18px; }
.file span { flex: 1; text-align: left; margin-left: 14px; }
.show-all { margin-left: auto; height: 32px; padding: 0 15px; border: 1px solid #8d8c8a; border-radius: 4px; background: #e6e4e2; font-size: 14px; font-weight: 600; color: #4c4b48; }
.dismiss { margin-left: 13px; color: #777; }
```
